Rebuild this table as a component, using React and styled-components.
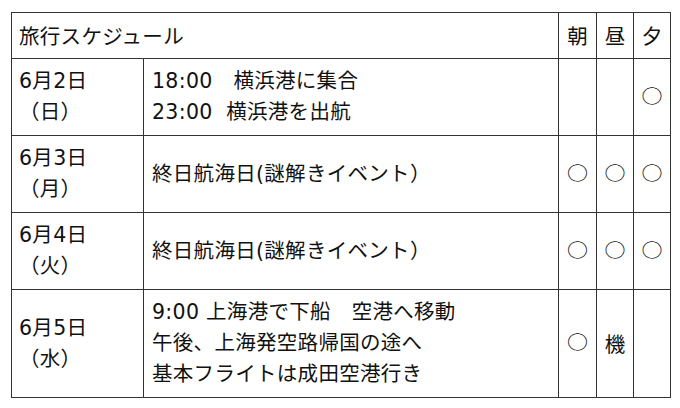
import React from "react";
import styled, { createGlobalStyle } from "styled-components";

const GlobalStyle = createGlobalStyle`
  body {
    margin: 0;
    background: #ffffff;
    font-family: "DejaVu Sans", "Noto Sans CJK JP", sans-serif;
    color: #111111;
  }
`;

const ScheduleTable = styled.table`
  margin: 12px 0 0 11px;
  border-collapse: collapse;
  table-layout: fixed;
  width: 659px;
  font-size: 20.5px;
  line-height: 31px;
  letter-spacing: 0.3px;
`;

const Col = styled.col`
  width: ${({ $w }) => $w}px;
`;

const Cell = styled.td`
  border: 1px solid #333333;
  padding: 7px;
  vertical-align: middle;
  text-align: left;
  white-space: pre-wrap;
`;

const TitleCell = styled(Cell)`
  font-family: "Noto Sans CJK JP", sans-serif;
`;

const PlanCell = styled(Cell)`
  padding-left: 8px;
`;

const MarkCell = styled(Cell)`
  padding: 7px 0;
  text-align: center;
  letter-spacing: 0;
  font-family: "Noto Sans CJK JP", sans-serif;
`;

const Circle = styled.span`
  display: inline-block;
  font-size: 21px;
  transform: translateY(-2px) scaleY(0.85);
`;

const days = [
  {
    date: "6月2日",
    dow: "（日）",
    plan: ["18:00　横浜港に集合", "23:00  横浜港を出航"],
    meals: ["", "", "○"],
  },
  {
    date: "6月3日",
    dow: "（月）",
    plan: ["終日航海日(謎解きイベント）"],
    meals: ["○", "○", "○"],
  },
  {
    date: "6月4日",
    dow: "（火）",
    plan: ["終日航海日(謎解きイベント）"],
    meals: ["○", "○", "○"],
  },
  {
    date: "6月5日",
    dow: "（水）",
    plan: [
      "9:00 上海港で下船　空港へ移動",
      "午後、上海発空路帰国の途へ",
      "基本フライトは成田空港行き",
    ],
    meals: ["○", "機", ""],
  },
];

const columns = [132, 415, 38, 37, 37];

const Lines = ({ items }) =>
  items.map((line, i) => (
    <React.Fragment key={i}>
      {i > 0 && <br />}
      {line}
    </React.Fragment>
  ));

const Meal = ({ value }) =>
  value === "○" ? <Circle>○</Circle> : value;

const App = () => {
  return (
    <>
      <GlobalStyle />
      <ScheduleTable>
        <colgroup>
          {columns.map((w, i) => (
            <Col key={i} $w={w} />
          ))}
        </colgroup>
        <tbody>
          <tr>
            <TitleCell colSpan={2}>旅行スケジュール</TitleCell>
            <MarkCell>朝</MarkCell>
            <MarkCell>昼</MarkCell>
            <MarkCell>夕</MarkCell>
          </tr>
          {days.map((day) => (
            <tr key={day.date}>
              <Cell>
                <Lines items={[day.date, day.dow]} />
              </Cell>
              <PlanCell>
                <Lines items={day.plan} />
              </PlanCell>
              {day.meals.map((m, i) => (
                <MarkCell key={i}>
                  <Meal value={m} />
                </MarkCell>
              ))}
            </tr>
          ))}
        </tbody>
      </ScheduleTable>
    </>
  );
};

export default App;
